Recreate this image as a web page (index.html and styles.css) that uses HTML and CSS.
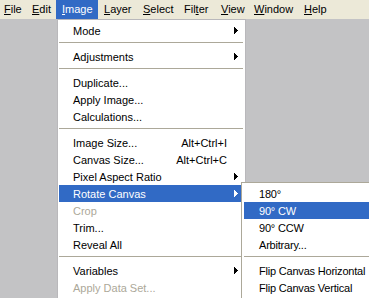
FILE: index.html
```html
<!DOCTYPE html>
<html>
<head>
<meta charset="utf-8">
<link rel="stylesheet" href="styles.css">
</head>
<body>
<div class="menubar">
  <span class="mi first"><u>F</u>ile</span>
  <span class="mi"><u>E</u>dit</span>
  <span class="mi active"><u>I</u>mage</span>
  <span class="mi"><u>L</u>ayer</span>
  <span class="mi"><u>S</u>elect</span>
  <span class="mi">Fil<u>t</u>er</span>
  <span class="mi"><u>V</u>iew</span>
  <span class="mi"><u>W</u>indow</span>
  <span class="mi"><u>H</u>elp</span>
</div>
<div class="workspace">
  <div class="menu main">
    <div class="item"><span class="label">Mode</span><span class="arr"><svg width="4" height="7" viewBox="0 0 4 7"><path d="M0 0h1v7h-1zM1 1h1v5h-1zM2 2h1v3h-1zM3 3h1v1h-1z"/></svg></span></div>
    <div class="sep"></div>
    <div class="item"><span class="label">Adjustments</span><span class="arr"><svg width="4" height="7" viewBox="0 0 4 7"><path d="M0 0h1v7h-1zM1 1h1v5h-1zM2 2h1v3h-1zM3 3h1v1h-1z"/></svg></span></div>
    <div class="sep"></div>
    <div class="item"><span class="label">Duplicate...</span><span class="arr"></span></div>
    <div class="item"><span class="label">Apply Image...</span><span class="arr"></span></div>
    <div class="item"><span class="label">Calculations...</span><span class="arr"></span></div>
    <div class="sep"></div>
    <div class="item"><span class="label">Image Size...</span><span class="sc">Alt+Ctrl+I</span><span class="arr"></span></div>
    <div class="item"><span class="label">Canvas Size...</span><span class="sc">Alt+Ctrl+C</span><span class="arr"></span></div>
    <div class="item"><span class="label">Pixel Aspect Ratio</span><span class="arr"><svg width="4" height="7" viewBox="0 0 4 7"><path d="M0 0h1v7h-1zM1 1h1v5h-1zM2 2h1v3h-1zM3 3h1v1h-1z"/></svg></span></div>
    <div class="item hl"><span class="label">Rotate Canvas</span><span class="arr"><svg width="4" height="7" viewBox="0 0 4 7"><path d="M0 0h1v7h-1zM1 1h1v5h-1zM2 2h1v3h-1zM3 3h1v1h-1z"/></svg></span></div>
    <div class="item dis"><span class="label">Crop</span><span class="arr"></span></div>
    <div class="item"><span class="label">Trim...</span><span class="arr"></span></div>
    <div class="item"><span class="label">Reveal All</span><span class="arr"></span></div>
    <div class="sep"></div>
    <div class="item"><span class="label">Variables</span><span class="arr"><svg width="4" height="7" viewBox="0 0 4 7"><path d="M0 0h1v7h-1zM1 1h1v5h-1zM2 2h1v3h-1zM3 3h1v1h-1z"/></svg></span></div>
    <div class="item dis"><span class="label">Apply Data Set...</span><span class="arr"></span></div>
  </div>
  <div class="menu sub">
    <div class="item"><span class="label">180°</span></div>
    <div class="item hl"><span class="label">90° CW</span></div>
    <div class="item"><span class="label">90° CCW</span></div>
    <div class="item"><span class="label">Arbitrary...</span></div>
    <div class="sep"></div>
    <div class="item"><span class="label">Flip Canvas Horizontal</span></div>
    <div class="item"><span class="label">Flip Canvas Vertical</span></div>
  </div>
</div>
</body>
</html>
```
FILE: styles.css
```css
html, body {
  margin: 0;
  padding: 0;
}
body {
  width: 369px;
  height: 298px;
  overflow: hidden;
  background: #c3c3c5;
  font-family: "Liberation Sans", Arial, sans-serif;
  font-size: 11px;
  color: #000;
  display: flex;
  flex-direction: column;
}
.menubar {
  height: 19px;
  background: #ece9d8;
  display: grid;
  grid-template-columns: 26px 30px 42px 39px 41px 37px 33px 50px auto;
  line-height: 19px;
  flex: none;
}
.mi {
  padding-left: 6px;
  white-space: nowrap;
}
.mi.first {
  padding-left: 4px;
}
.mi u {
  text-decoration: underline;
  text-underline-offset: 1px;
}
.mi.active {
  background: #316ac5;
  color: #fff;
}
.workspace {
  position: relative;
  flex: 1;
}
.menu {
  position: absolute;
  background: #fff;
  border: 1px solid #aca899;
  box-sizing: border-box;
  overflow: hidden;
}
.main {
  left: 57px;
  top: 0;
  width: 189px;
  padding: 2px 1px;
  border-color: #b9b8bb;
}
.sub {
  left: 241px;
  top: 163px;
  width: 129px;
  padding: 2px 0 2px 2px;
  border-right: 0;
}
.item {
  height: 17px;
  display: flex;
  align-items: center;
  padding-left: 14px;
  white-space: nowrap;
}
.sub .item {
  padding-left: 15px;
}
.label, .sc {
  line-height: 15px;
  padding-top: 2px;
}
.label {
  flex: 1;
}
.sub .label {
  letter-spacing: -0.2px;
}
.sc {
  text-align: right;
}
.arr {
  width: 17px;
  height: 17px;
  display: flex;
  align-items: center;
  padding-left: 7px;
  box-sizing: border-box;
}
.arr svg {
  display: block;
  fill: #000;
}
.item.hl {
  background: #316ac5;
  color: #fff;
}
.item.hl .arr svg {
  fill: #fff;
}
.item.dis {
  color: #aca899;
}
.sep {
  height: 1px;
  background: #aca899;
  margin: 3px 1px 5px 0;
}
.sub .sep {
  margin-right: 0;
}
```
